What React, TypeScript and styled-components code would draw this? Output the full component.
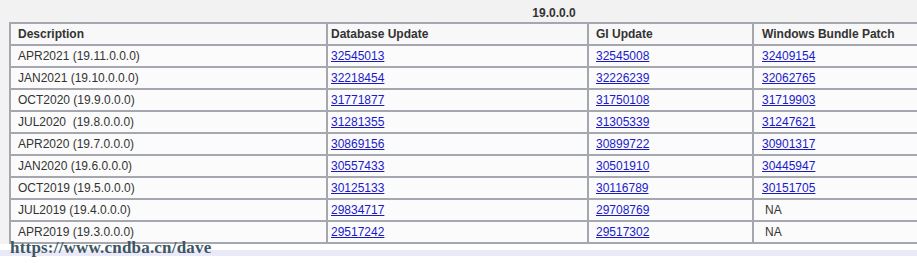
import styled, { createGlobalStyle } from 'styled-components'

const GlobalStyle = createGlobalStyle`
  html, body {
    margin: 0;
    padding: 0;
    overflow: hidden;
    background: #ffffff;
  }
`

type Row = {
  desc: string
  db: string
  gi: string
  win: string | null
}

const rows: Row[] = [
  { desc: 'APR2021 (19.11.0.0.0)', db: '32545013', gi: '32545008', win: '32409154' },
  { desc: 'JAN2021 (19.10.0.0.0)', db: '32218454', gi: '32226239', win: '32062765' },
  { desc: 'OCT2020 (19.9.0.0.0)', db: '31771877', gi: '31750108', win: '31719903' },
  { desc: 'JUL2020  (19.8.0.0.0)', db: '31281355', gi: '31305339', win: '31247621' },
  { desc: 'APR2020 (19.7.0.0.0)', db: '30869156', gi: '30899722', win: '30901317' },
  { desc: 'JAN2020 (19.6.0.0.0)', db: '30557433', gi: '30501910', win: '30445947' },
  { desc: 'OCT2019 (19.5.0.0.0)', db: '30125133', gi: '30116789', win: '30151705' },
  { desc: 'JUL2019 (19.4.0.0.0)', db: '29834717', gi: '29708769', win: null },
  { desc: 'APR2019 (19.3.0.0.0)', db: '29517242', gi: '29517302', win: null },
]

const colPad = [7, 3, 7, 8]

export default function App() {
  return (
    <>
      <GlobalStyle />
      <Page>
        <TableArea>
          <Table>
            <Caption>19.0.0.0</Caption>
            <colgroup>
              <col style={{ width: 317 }} />
              <col style={{ width: 261 }} />
              <col style={{ width: 165 }} />
              <col style={{ width: 345 }} />
            </colgroup>
            <thead>
              <tr>
                <Th $pad={colPad[0]}>Description</Th>
                <Th $pad={colPad[1]}>Database Update</Th>
                <Th $pad={colPad[2]}>GI Update</Th>
                <Th $pad={colPad[3]}>Windows Bundle Patch</Th>
              </tr>
            </thead>
            <tbody>
              {rows.map(r => (
                <tr key={r.desc}>
                  <Td $pad={colPad[0]}>{r.desc}</Td>
                  <Td $pad={colPad[1]}>
                    <PatchLink href="#">{r.db}</PatchLink>
                  </Td>
                  <Td $pad={colPad[2]}>
                    <PatchLink href="#">{r.gi}</PatchLink>
                  </Td>
                  <Td $pad={r.win ? colPad[3] : colPad[3] + 3}>
                    {r.win ? <PatchLink href="#">{r.win}</PatchLink> : 'NA'}
                  </Td>
                </tr>
              ))}
            </tbody>
          </Table>
          <Watermark>https://www.cndba.cn/dave</Watermark>
        </TableArea>
        <Band />
      </Page>
    </>
  )
}

const Page = styled.div`
  width: 1200px;
  height: 263px;
  background: #ffffff;
  font-family: 'Liberation Sans', Arial, sans-serif;
`

const TableArea = styled.div`
  position: relative;
  background: #f2f2f2;
  padding: 5px 0 0 9px;
`

const Table = styled.table`
  border-collapse: collapse;
  table-layout: fixed;
  width: 1088px;
  font-size: 12px;
  color: #333333;
  border-bottom: 2px solid #2e2e2e;
`

const Caption = styled.caption`
  font-weight: bold;
  font-size: 12px;
  color: #333333;
  height: 17px;
  line-height: 17px;
  text-align: center;
`

const Th = styled.th<{ $pad: number }>`
  height: 20px;
  padding: 0 0 0 ${({ $pad }) => $pad}px;
  border: 2px solid #a4a8ae;
  background: #f8f8f8;
  text-align: left;
  font-weight: bold;
  white-space: pre;
`

const Td = styled.td<{ $pad: number }>`
  height: 20px;
  padding: 0 0 0 ${({ $pad }) => $pad}px;
  border: 2px solid #a4a8ae;
  background: #fbfbfb;
  white-space: pre;
`

const PatchLink = styled.a`
  color: #1a1ac8;
  text-decoration: underline;
`

const Watermark = styled.div`
  position: absolute;
  left: 10px;
  top: 238px;
  font-family: 'Liberation Serif', 'Times New Roman', serif;
  font-weight: bold;
  font-size: 17px;
  line-height: 19px;
  color: #3c5663;
  letter-spacing: 0.2px;
`

const Band = styled.div`
  height: 6px;
  margin-top: 6px;
  background: #e9e9f8;
`
